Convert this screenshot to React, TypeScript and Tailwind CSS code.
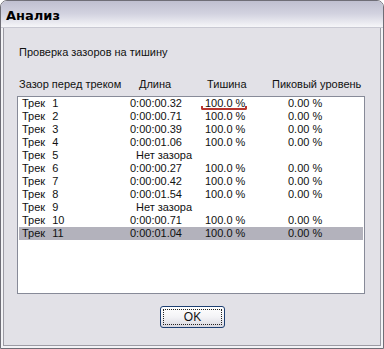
const rows: { name: string; len?: string; silence?: string; peak?: string }[] = [
  { name: "1", len: "0:00:00.32", silence: "100.0 %", peak: "0.00 %" },
  { name: "2", len: "0:00:00.71", silence: "100.0 %", peak: "0.00 %" },
  { name: "3", len: "0:00:00.39", silence: "100.0 %", peak: "0.00 %" },
  { name: "4", len: "0:00:01.06", silence: "100.0 %", peak: "0.00 %" },
  { name: "5" },
  { name: "6", len: "0:00:00.27", silence: "100.0 %", peak: "0.00 %" },
  { name: "7", len: "0:00:00.42", silence: "100.0 %", peak: "0.00 %" },
  { name: "8", len: "0:00:01.54", silence: "100.0 %", peak: "0.00 %" },
  { name: "9" },
  { name: "10", len: "0:00:00.71", silence: "100.0 %", peak: "0.00 %" },
  { name: "11", len: "0:00:01.04", silence: "100.0 %", peak: "0.00 %" },
];

export default function App() {
  return (
    <div
      className="flex h-[349px] w-[384px] flex-col overflow-hidden rounded-t-[7px] border border-[#6f6e77] bg-[#f3f3f6] text-[11px] text-[#111]"
      style={{ fontFamily: '"Liberation Sans", Arial, sans-serif' }}
    >
      {/* Title bar */}
      <div className="flex h-[27px] shrink-0 items-center border-b border-[#c9c9d3] bg-gradient-to-b from-[#bfbfd0] via-[#d3d3e0] to-[#f6f6f9] pl-[5px] pt-[3px]">
        <span
          className="text-[13px] font-bold text-black"
          style={{ fontFamily: '"DejaVu Sans", sans-serif' }}
        >
          Анализ
        </span>
      </div>

      {/* Body */}
      <div className="mx-[2px] mb-[2px] flex flex-1 flex-col border-x border-b border-[#9c9ba4] bg-[#e2e1e7]">
        <div className="mt-[18px] pl-[15px] leading-[13px]">Проверка зазоров на тишину</div>

        <div className="mt-[19px] grid grid-cols-[120px_68px_65px_1fr] pl-[15px] leading-[13px]">
          <span>Зазор перед треком</span>
          <span>Длина</span>
          <span>Тишина</span>
          <span>Пиковый уровень</span>
        </div>

        {/* List */}
        <div className="ml-[13px] mt-[5px] h-[198px] w-[348px] border border-[#878a98] bg-white px-[1px]">
          {rows.map((r, i) => (
            <div
              key={r.name}
              className={
                "grid h-[13px] grid-cols-[111px_75px_83px_1fr] items-center leading-[13px] " +
                (i === rows.length - 1 ? "bg-[#b3b2bc]" : "")
              }
            >
              <span className="flex gap-[7px] pl-[3px]">
                <span>Трек</span>
                <span>{r.name}</span>
              </span>
              {r.len ? (
                <>
                  <span>{r.len}</span>
                  <span className="relative">
                    {r.silence}
                    {i === 0 ? (
                      <span className="absolute left-[-4px] top-[9px] h-[4px] w-[46px] rounded-b-[2px] border-2 border-t-0 border-[#b8342c]" />
                    ) : null}
                  </span>
                  <span>{r.peak}</span>
                </>
              ) : (
                <span className="col-span-2 pl-[6px]">Нет зазора</span>
              )}
            </div>
          ))}
        </div>

        {/* OK */}
        <div className="mt-[12px] pl-[156px]">
          <button className="flex h-[22px] w-[65px] items-center justify-center rounded-[3px] border border-[#1d3f72] bg-gradient-to-b from-white via-[#f3f3f6] to-[#d9d8e0] p-[2px]">
            <span className="flex h-full w-full items-center justify-center border border-dotted border-[#222] text-[12px]">
              OK
            </span>
          </button>
        </div>
      </div>
    </div>
  );
}
